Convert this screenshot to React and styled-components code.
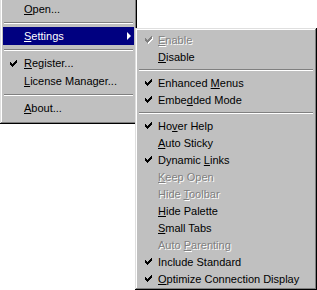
import styled, { createGlobalStyle } from "styled-components";

const GlobalStyle = createGlobalStyle`
  body {
    margin: 0;
    background: #fff;
    font-family: "Liberation Sans", Arial, sans-serif;
  }
`;

const Screen = styled.div`
  position: relative;
  width: 317px;
  height: 290px;
  overflow: hidden;
  background: #fff;
`;

const Menu = styled.div`
  display: flex;
  flex-direction: column;
  box-sizing: border-box;
  background: #c0c0c0;
  padding: 3px;
  box-shadow: inset -1px -1px #000, inset 1px 1px #dfdfdf,
    inset -2px -2px #808080, inset 2px 2px #fff;
`;

const MainMenu = styled(Menu)`
  width: 137px;
  margin-top: -3px;
  padding-bottom: 7px;
`;

const SubMenu = styled(Menu)`
  position: absolute;
  left: 135px;
  top: 28px;
  width: 182px;
`;

const Item = styled.div`
  display: flex;
  align-items: center;
  height: ${(p) => p.$h || 17}px;
  font-size: 11px;
  white-space: nowrap;
  background: ${(p) => (p.$active ? "#000080" : "transparent")};
  color: ${(p) => (p.$active ? "#fff" : p.$disabled ? "#808080" : "#000")};
  text-shadow: ${(p) => (p.$disabled ? "1px 1px 0 #fff" : "none")};
`;

const CheckCell = styled.span`
  width: ${(p) => p.$w || 20}px;
  flex-shrink: 0;
  display: flex;
  justify-content: center;
  align-items: center;
`;

const Label = styled.span`
  flex: 1;
`;

const Arrow = styled.span`
  width: 0;
  height: 0;
  margin-right: 3px;
  border-top: 4px solid transparent;
  border-bottom: 4px solid transparent;
  border-left: 4px solid currentColor;
`;

const Separator = styled.div`
  height: 9px;
  display: flex;
  flex-direction: column;
  justify-content: center;
  padding: 0 1px;

  &::before {
    content: "";
    height: 1px;
    background: #808080;
  }
  &::after {
    content: "";
    height: 1px;
    background: #fff;
  }
`;

const CheckSvg = styled.svg`
  display: block;
  ${(p) => p.$disabled && "filter: drop-shadow(1px 1px 0 #fff);"}
`;

function Check({ disabled }) {
  return (
    <CheckSvg width="7" height="7" viewBox="0 0 7 7" shapeRendering="crispEdges" $disabled={disabled}>
      <path
        fill={disabled ? "#808080" : "#000"}
        d="M0 2h1v3H0z M1 3h1v3H1z M2 4h1v3H2z M3 3h1v3H3z M4 2h1v3H4z M5 1h1v3H5z M6 0h1v3H6z"
      />
    </CheckSvg>
  );
}

function MenuItem({ checked, disabled, active, arrow, h, cw, children }) {
  return (
    <Item $active={active} $disabled={disabled} $h={h}>
      <CheckCell $w={cw}>{checked && <Check disabled={disabled} />}</CheckCell>
      <Label>{children}</Label>
      {arrow && <Arrow />}
    </Item>
  );
}

export default function App() {
  return (
    <Screen>
      <GlobalStyle />
      <MainMenu>
        <MenuItem h={18} cw={21}><u>O</u>pen...</MenuItem>
        <Separator />
        <MenuItem h={18} cw={21} active arrow><u>S</u>ettings</MenuItem>
        <Separator />
        <MenuItem h={18} cw={21} checked><u>R</u>egister...</MenuItem>
        <MenuItem h={18} cw={21}><u>L</u>icense Manager...</MenuItem>
        <Separator />
        <MenuItem h={18} cw={21}><u>A</u>bout...</MenuItem>
      </MainMenu>
      <SubMenu>
        <MenuItem checked disabled><u>E</u>nable</MenuItem>
        <MenuItem><u>D</u>isable</MenuItem>
        <Separator />
        <MenuItem checked>Enhanced <u>M</u>enus</MenuItem>
        <MenuItem checked>Embe<u>d</u>ded Mode</MenuItem>
        <Separator />
        <MenuItem checked>Ho<u>v</u>er Help</MenuItem>
        <MenuItem><u>A</u>uto Sticky</MenuItem>
        <MenuItem checked>Dynamic <u>L</u>inks</MenuItem>
        <MenuItem disabled><u>K</u>eep Open</MenuItem>
        <MenuItem disabled>Hide <u>T</u>oolbar</MenuItem>
        <MenuItem><u>H</u>ide Palette</MenuItem>
        <MenuItem><u>S</u>mall Tabs</MenuItem>
        <MenuItem disabled>Auto <u>P</u>arenting</MenuItem>
        <MenuItem checked>Include Standard</MenuItem>
        <MenuItem checked><u>O</u>ptimize Connection Display</MenuItem>
      </SubMenu>
    </Screen>
  );
}
